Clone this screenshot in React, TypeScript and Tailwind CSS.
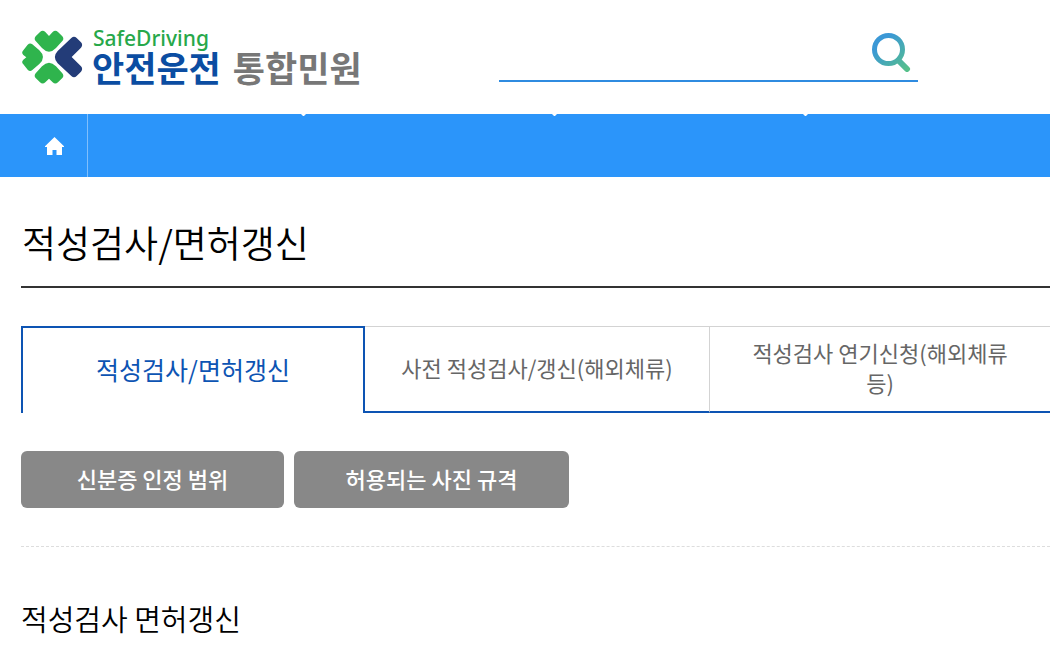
const menus = [
  { id: 'license', width: 'w-[216px]' },
  { id: 'exam', width: 'w-[251px]' },
  { id: 'traffic', width: 'w-[251px]' },
];

const tabs = ['적성검사/면허갱신', '사전 적성검사/갱신(해외체류)', '적성검사 연기신청(해외체류등)'];

const guides = [
  { label: '신분증 인정 범위', width: 'w-[263px]' },
  { label: '허용되는 사진 규격', width: 'w-[275px]' },
];

function CloverMark() {
  return (
    <svg aria-hidden viewBox="33 30 189 162" className="h-[54px] w-[63px] shrink-0">
      <g fill="#2fb44d">
        <path d="M90 36Q98 29 106 36L117 48L128 36Q136 29 144 36L157 49Q163 56 157 63L138 84Q117 106 96 84L77 63Q71 56 77 49Z" />
        <path d="M90 187Q98 194 106 187L117 176L128 187Q136 194 144 187L157 174Q163 167 157 160L138 139Q117 117 96 139L77 160Q71 167 77 174Z" />
        <path d="M40 91Q33 98 40 105L49 112L40 119Q33 126 40 133L53 149Q60 156 67 150L88 132Q110 112 88 91L67 73Q60 67 53 74Z" />
      </g>
      <path
        fill="#233c78"
        d="M184 54Q192 47 200 54L213 67Q220 75 213 83L185 111L213 139Q220 147 213 155L200 168Q192 176 184 168L143 130Q126 111 143 93Z"
      />
    </svg>
  );
}

function SearchIcon() {
  return (
    <svg aria-hidden viewBox="0 0 40 40" className="h-10 w-10" fill="none" strokeWidth="5">
      <defs>
        <linearGradient id="lens" gradientUnits="userSpaceOnUse" x1="4" y1="4" x2="36" y2="38">
          <stop offset="0.2" stopColor="#3b98d6" />
          <stop offset="1" stopColor="#56c08a" />
        </linearGradient>
      </defs>
      <circle cx="17.5" cy="17.5" r="14" stroke="url(#lens)" />
      <path d="M27.5 28.5L36 37" stroke="url(#lens)" strokeWidth="6" strokeLinecap="round" />
    </svg>
  );
}

function HomeIcon() {
  return (
    <svg aria-hidden viewBox="0 0 19 18" className="h-[18px] w-[19px]" fill="white">
      <path d="M9.5 0L19 9.3V10H17V18H11.5V13H7.5V18H2V10H0V9.3Z" />
    </svg>
  );
}

function Header() {
  return (
    <header className="flex h-[114px] items-start pt-7">
      <a href="#home" className="ml-[21px] flex w-[478px] shrink-0 items-center">
        <CloverMark />
        <span className="ml-2 flex flex-col">
          <span className="pl-px font-['Noto_Sans'] text-[21px] leading-5 font-medium text-[#27a84a]">
            SafeDriving
          </span>
          <span className="flex gap-3 text-[35px] leading-[38px] font-bold">
            <span className="text-[#0b4da2]">안전운전</span>
            <span className="text-[#777777]">통합민원</span>
          </span>
        </span>
      </a>
      <form
        className="mt-1 flex h-[50px] w-[419px] border-b-2 border-[#2f8be0]"
        onSubmit={(e) => e.preventDefault()}
      >
        <input
          type="text"
          aria-label="검색어"
          className="min-w-0 flex-1 px-3 text-xl outline-none"
        />
        <button aria-label="검색" className="mr-[7px] h-10">
          <SearchIcon />
        </button>
      </form>
    </header>
  );
}

function MainNav() {
  return (
    <nav className="flex h-[63px] overflow-hidden bg-[#2b95fa]">
      <a
        href="#home"
        aria-label="홈"
        className="flex w-[88px] shrink-0 items-center justify-center border-r border-[#80bffc] pl-[21px]"
      >
        <HomeIcon />
      </a>
      <ul className="flex">
        {menus.map((menu) => (
          <li key={menu.id} className={`relative ${menu.width}`}>
            <svg
              aria-hidden
              viewBox="0 0 5 2"
              className="absolute top-0 -right-0.5 h-0.5 w-[5px]"
              fill="white"
            >
              <path d="M0 0H5L2.5 2.5Z" />
            </svg>
          </li>
        ))}
      </ul>
    </nav>
  );
}

function Tabs() {
  return (
    <div role="tablist" className="mt-[38px] grid h-[87px] grid-cols-[344fr_345fr_340fr]">
      {tabs.map((label, i) => (
        <button
          key={label}
          role="tab"
          aria-selected={i === 0}
          className={
            i === 0
              ? 'border-2 border-b-0 border-[#0d54b3] pb-0.5 text-[25px] text-[#0d54b3]'
              : `border-t border-b-2 border-t-[#d3d3d3] border-b-[#0d54b3] px-9 pb-1 text-[22px] leading-[30px] text-[#666666] ${
                  i === 1 ? 'border-r border-r-[#d3d3d3]' : ''
                }`
          }
        >
          {label}
        </button>
      ))}
    </div>
  );
}

export default function App() {
  return (
    <div className="overflow-hidden bg-white font-['Noto_Sans_CJK_KR',sans-serif] text-black">
      <Header />
      <MainNav />
      <main className="pb-8 pl-[21px]">
        <h1 className="border-b-2 border-[#333333] pt-[39px] pb-[17px] pl-px text-[37px] leading-[53px] font-[350]">
          적성검사/면허갱신
        </h1>
        <Tabs />
        <div className="mt-[38px] flex gap-[10px] border-b border-dashed border-[#dddddd] pb-[38px]">
          {guides.map((guide) => (
            <button
              key={guide.label}
              className={`h-[57px] rounded-md bg-[#888888] pb-0.5 text-[22px] font-medium whitespace-nowrap text-white ${guide.width}`}
            >
              {guide.label}
            </button>
          ))}
        </div>
        <h2 className="mt-[51px] text-[29px] leading-[40px] font-[350]">적성검사 면허갱신</h2>
      </main>
    </div>
  );
}
